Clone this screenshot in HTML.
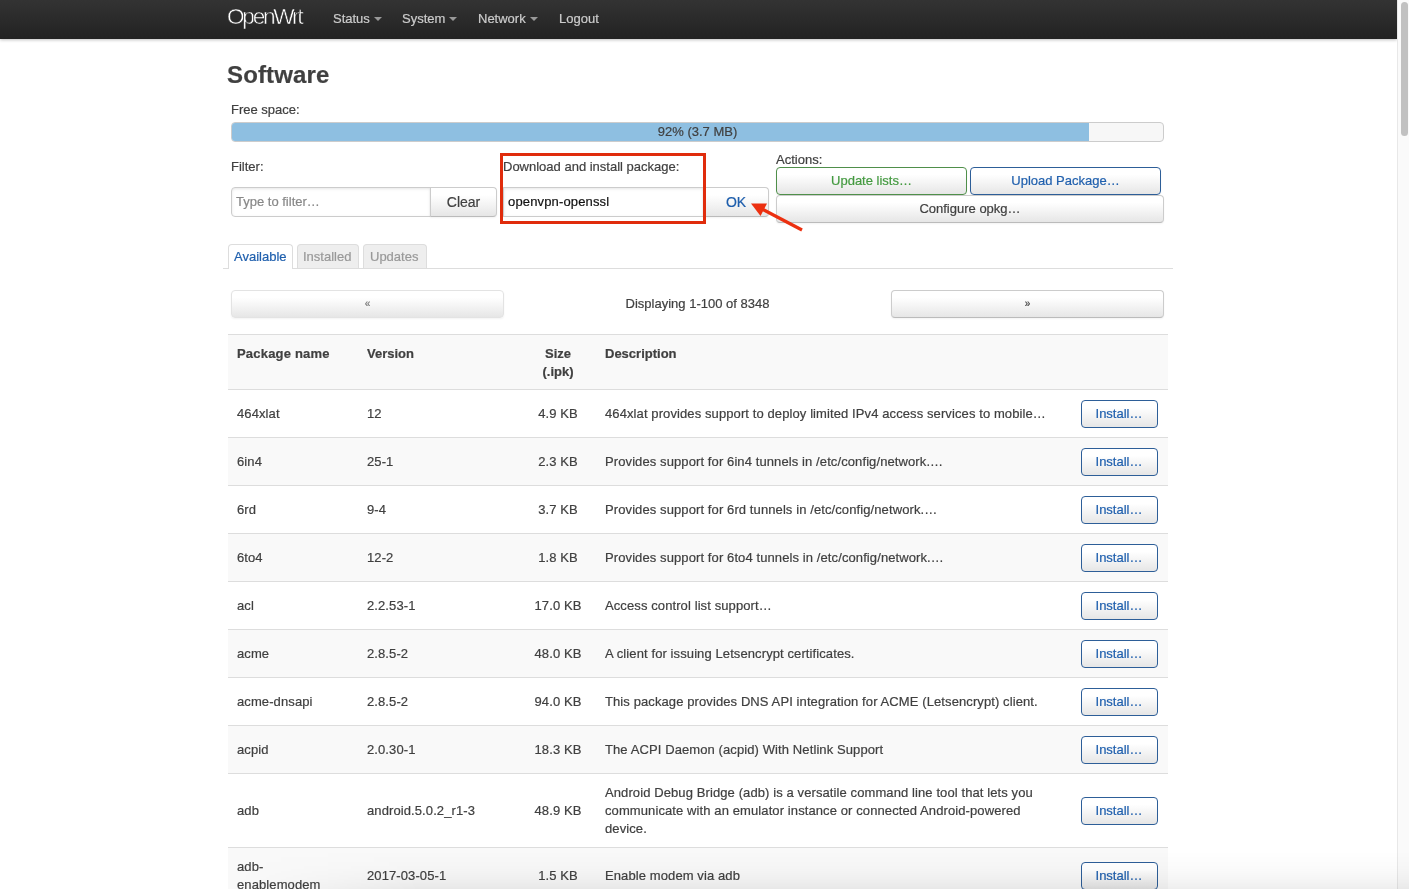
<!DOCTYPE html>
<html><head><meta charset="utf-8">
<style>
*{box-sizing:border-box}
html,body{margin:0;padding:0;background:#fff}
body>*{will-change:transform}
body{width:1409px;height:889px;overflow:hidden;position:relative;font-family:"Liberation Sans",sans-serif;font-size:13px;line-height:18px;color:#404040;-webkit-text-stroke:0.2px currentColor}
.abs{position:absolute}
#hdr{left:0;top:0;width:1397px;height:39px;background:linear-gradient(#333,#222);box-shadow:0 1px 3px rgba(0,0,0,.25)}
#brand{left:227px;top:2px;font-size:22.7px;color:#fff;line-height:28px;letter-spacing:-2.3px;-webkit-text-stroke:0.5px #2b2b2b}
.nav{top:10px;color:#ccc;font-size:13px;line-height:18px}
.caret{display:inline-block;width:0;height:0;border-left:4px solid transparent;border-right:4px solid transparent;border-top:4px solid #999;vertical-align:middle;margin-left:4px;margin-top:-2px}
#sb{left:1397px;top:0;width:12px;height:889px;background:#fafafa;border-left:1px solid #e8e8e8}
#thumb{left:1401px;top:2px;width:7px;height:134px;background:#c1c1c1;border-radius:4px}
h2{margin:0;font-size:24px;font-weight:bold;line-height:30px;color:#404040}
.btn{position:absolute;background:linear-gradient(#fff 25%,#e6e6e6);border:1px solid #ccc;border-bottom-color:#bbb;border-radius:4px;text-align:center;color:#404040;font-size:13px;line-height:18px;box-shadow:inset 0 1px 0 rgba(255,255,255,.2),0 1px 2px rgba(0,0,0,.05)}
.inp{position:absolute;background:#fff;border:1px solid #ccc;box-shadow:inset 0 1px 3px rgba(0,0,0,.1)}
.row{position:absolute;left:228px;width:940px;border-top:1px solid #ddd;background:#fff}
.row.g,.row.hd{background:#f9f9f9}
.hd .c{font-weight:bold}
.c{position:absolute}
.cm{position:absolute;top:0;bottom:0;display:flex;align-items:center}
.sz{left:290px;width:80px;justify-content:center;text-align:center}
.ds{left:377px;width:450px}
.row .cm{letter-spacing:0.1px}
.row .ibw{letter-spacing:0}
.ibw{left:853px}
.ib{display:inline-block;width:77px;height:28px;border:1px solid #2d5e98;border-radius:4px;background:linear-gradient(#fff 25%,#e6e6e6);color:#2060ae;padding-right:1px;text-align:center;line-height:26px}
</style></head><body>
<div id="hdr" class="abs"></div>
<div id="brand" class="abs">OpenWrt</div>
<div class="abs nav" style="left:333px">Status<span class="caret"></span></div>
<div class="abs nav" style="left:402px">System<span class="caret"></span></div>
<div class="abs nav" style="left:478px">Network<span class="caret"></span></div>
<div class="abs nav" style="left:559px">Logout</div>
<div id="sb" class="abs"></div>
<div id="thumb" class="abs"></div>

<h2 class="abs" style="left:227px;top:60px;letter-spacing:0.15px">Software</h2>
<div class="abs" style="left:231px;top:101px">Free space:</div>
<div class="abs" style="left:231px;top:122px;width:933px;height:20px;border:1px solid #ccc;border-radius:4px;background:#f7f7f7;overflow:hidden">
  <div class="abs" style="left:0;top:0;width:857px;height:18px;background:#8ebfe1"></div>
  <div class="abs" style="left:0;top:0;width:931px;text-align:center;line-height:18px;font-size:13px;color:#404040">92% (3.7 MB)</div>
</div>

<div class="abs" style="left:231px;top:158px">Filter:</div>
<div class="inp" style="left:231px;top:187px;width:200px;height:30px;border-radius:4px 0 0 4px"></div>
<div class="abs" style="left:236px;top:193px;color:#888">Type to filter…</div>
<div class="btn" style="left:430px;top:187px;width:67px;height:30px;border-radius:0 4px 4px 0;line-height:28px;font-size:14px">Clear</div>

<div class="abs" style="left:503px;top:158px">Download and install package:</div>
<div class="inp" style="left:503px;top:187px;width:201px;height:30px"></div>
<div class="abs" style="left:508px;top:193px;color:#111;letter-spacing:0.15px">openvpn-openssl</div>
<div class="btn" style="left:703px;top:187px;width:66px;height:30px;border-radius:0 4px 4px 0;line-height:28px;font-size:14px;color:#1e5eac">OK</div>

<div class="abs" style="left:776px;top:151px">Actions:</div>
<div class="btn" style="left:776px;top:167px;width:191px;height:28px;border-color:#4f8f4a;color:#449a40;line-height:26px">Update lists…</div>
<div class="btn" style="left:970px;top:167px;width:191px;height:28px;border-color:#2d5e98;color:#2060ae;line-height:26px">Upload Package…</div>
<div class="btn" style="left:776px;top:195px;width:388px;height:28px;line-height:26px">Configure opkg…</div>

<div class="abs" style="left:500px;top:153px;width:205.5px;height:71px;border:3px solid #e02c0c"></div>
<svg class="abs" style="left:740px;top:195px" width="70" height="40" viewBox="740 195 70 40">
  <line x1="802" y1="230" x2="762" y2="209" stroke="#ec3010" stroke-width="3.2" stroke-linecap="butt"/>
  <polygon points="751,203.5 767,203.5 760.5,216" fill="#ec3010"/>
</svg>

<!-- tabs -->
<div class="abs" style="left:223px;top:268px;width:950px;height:1px;background:#ddd"></div>
<div class="abs" style="left:228px;top:244px;width:65px;height:25px;border:1px solid #ddd;border-bottom:none;border-radius:4px 4px 0 0;background:#fff;color:#2060ae;padding-left:5px;line-height:24px">Available</div>
<div class="abs" style="left:297px;top:244px;width:62px;height:24px;border:1px solid #ddd;border-bottom:none;border-radius:4px 4px 0 0;background:#eee;color:#999;padding-left:5px;line-height:24px">Installed</div>
<div class="abs" style="left:363px;top:244px;width:64px;height:24px;border:1px solid #ddd;border-bottom:none;border-radius:4px 4px 0 0;background:#eee;color:#999;padding-left:6px;line-height:24px">Updates</div>

<!-- pager -->
<div class="btn" style="left:231px;top:290px;width:273px;height:28px;border-color:#e3e3e3;color:#777;font-size:10px;line-height:26px">«</div>
<div class="abs" style="left:504px;top:295px;width:387px;text-align:center">Displaying 1-100 of 8348</div>
<div class="btn" style="left:891px;top:290px;width:273px;height:28px;font-size:10px;line-height:26px;color:#404040">»</div>

<div class="row hd" style="top:334px;height:55px"><div class="c" style="left:9px;top:10px;letter-spacing:0.2px">Package name</div><div class="c" style="left:139px;top:10px">Version</div><div class="c" style="left:290px;top:10px;width:80px;text-align:center">Size<br>(.ipk)</div><div class="c" style="left:377px;top:10px">Description</div></div>
<div class="row" style="top:389px;height:48px"><div class="cm" style="left:9px">464xlat</div><div class="cm" style="left:139px">12</div><div class="cm sz">4.9 KB</div><div class="cm ds">464xlat provides support to deploy limited IPv4 access services to mobile…</div><div class="cm ibw"><span class="ib">Install…</span></div></div>
<div class="row g" style="top:437px;height:48px"><div class="cm" style="left:9px">6in4</div><div class="cm" style="left:139px">25-1</div><div class="cm sz">2.3 KB</div><div class="cm ds">Provides support for 6in4 tunnels in /etc/config/network.…</div><div class="cm ibw"><span class="ib">Install…</span></div></div>
<div class="row" style="top:485px;height:48px"><div class="cm" style="left:9px">6rd</div><div class="cm" style="left:139px">9-4</div><div class="cm sz">3.7 KB</div><div class="cm ds">Provides support for 6rd tunnels in /etc/config/network.…</div><div class="cm ibw"><span class="ib">Install…</span></div></div>
<div class="row g" style="top:533px;height:48px"><div class="cm" style="left:9px">6to4</div><div class="cm" style="left:139px">12-2</div><div class="cm sz">1.8 KB</div><div class="cm ds">Provides support for 6to4 tunnels in /etc/config/network.…</div><div class="cm ibw"><span class="ib">Install…</span></div></div>
<div class="row" style="top:581px;height:48px"><div class="cm" style="left:9px">acl</div><div class="cm" style="left:139px">2.2.53-1</div><div class="cm sz">17.0 KB</div><div class="cm ds">Access control list support…</div><div class="cm ibw"><span class="ib">Install…</span></div></div>
<div class="row g" style="top:629px;height:48px"><div class="cm" style="left:9px">acme</div><div class="cm" style="left:139px">2.8.5-2</div><div class="cm sz">48.0 KB</div><div class="cm ds">A client for issuing Letsencrypt certificates.</div><div class="cm ibw"><span class="ib">Install…</span></div></div>
<div class="row" style="top:677px;height:48px"><div class="cm" style="left:9px">acme-dnsapi</div><div class="cm" style="left:139px">2.8.5-2</div><div class="cm sz">94.0 KB</div><div class="cm ds">This package provides DNS API integration for ACME (Letsencrypt) client.</div><div class="cm ibw"><span class="ib">Install…</span></div></div>
<div class="row g" style="top:725px;height:48px"><div class="cm" style="left:9px">acpid</div><div class="cm" style="left:139px">2.0.30-1</div><div class="cm sz">18.3 KB</div><div class="cm ds">The ACPI Daemon (acpid) With Netlink Support</div><div class="cm ibw"><span class="ib">Install…</span></div></div>
<div class="row" style="top:773px;height:74px"><div class="cm" style="left:9px">adb</div><div class="cm" style="left:139px">android.5.0.2_r1-3</div><div class="cm sz">48.9 KB</div><div class="cm ds">Android Debug Bridge (adb) is a versatile command line tool that lets you<br>communicate with an emulator instance or connected Android-powered<br>device.</div><div class="cm ibw"><span class="ib">Install…</span></div></div>
<div class="row g" style="top:847px;height:56px"><div class="cm" style="left:9px">adb-<br>enablemodem</div><div class="cm" style="left:139px">2017-03-05-1</div><div class="cm sz">1.5 KB</div><div class="cm ds">Enable modem via adb</div><div class="cm ibw"><span class="ib">Install…</span></div></div>
<div class="abs" style="left:0;top:851px;width:1409px;height:38px;background:linear-gradient(rgba(0,0,0,0),rgba(0,0,0,.015) 45%,rgba(0,0,0,.04) 75%,rgba(0,0,0,.065));-webkit-mask-image:linear-gradient(90deg,transparent 235px,#000 420px)"></div>
</body></html>
